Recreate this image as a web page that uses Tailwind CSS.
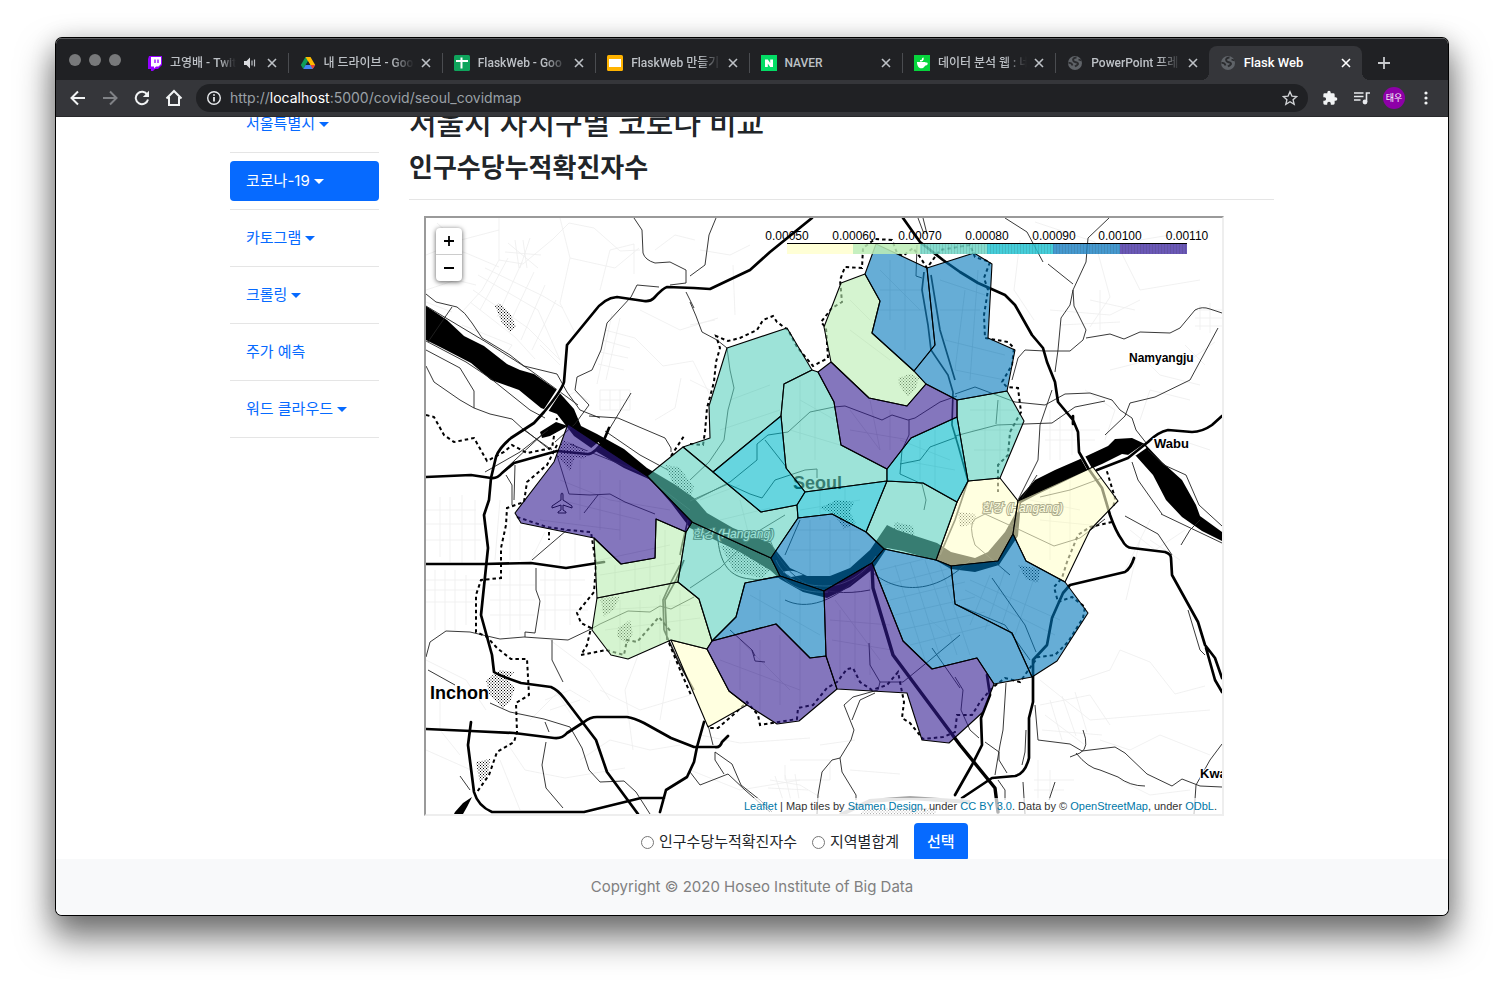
<!DOCTYPE html>
<html lang="ko">
<head>
<meta charset="utf-8">
<meta name="viewport" content="width=device-width, initial-scale=1">
<title>Flask Web</title>
<script src="https://cdn.jsdelivr.net/npm/@tailwindcss/browser@4"></script>
</head>
<body class="bg-white font-[Inter,'Noto_Sans_CJK_KR',sans-serif]">
<svg class="hidden" aria-hidden="true">
  <symbol id="x" viewBox="0 0 16 16"><path d="M4 4l8 8M12 4l-8 8" stroke="currentColor" stroke-width="1.6" fill="none"/></symbol>
  <symbol id="globe" viewBox="0 0 16 16"><circle cx="8" cy="8" r="7" fill="#5f6368"/><path d="M9.500 2.500C6.500 2.500 5.500 4.500 6.500 6S10.500 7 11 8.500S9.500 10 8 11.500" stroke="#2b2c2f" stroke-width="2" fill="none"/><path d="M1.500 8c2-.3 3.500.7 4 2.500M11.500 4.500l3 1" stroke="#2b2c2f" stroke-width="1.800" fill="none"/></symbol>
</svg>
<div class="flex h-screen flex-col px-14 pt-[38px] pb-[74px]">
<div class="flex min-h-0 flex-1 flex-col overflow-hidden rounded-md bg-white shadow-[0_0_0_1px_#000,0_20px_34px_4px_rgba(0,0,0,0.5),0_4px_26px_rgba(0,0,0,0.2)]">

  <header class="flex-none bg-[#202124]">
    <div class="flex h-[42px] items-end border-t border-[#5c5d60] pr-[86px] font-[Roboto,'Noto_Sans_CJK_KR',sans-serif] text-xs font-medium text-[#bdc1c6]">
      <div class="flex h-full w-[79px] flex-none items-center gap-2 pl-[13px]">
        <span class="size-3 rounded-full bg-[#78797b]"></span><span class="size-3 rounded-full bg-[#78797b]"></span><span class="size-3 rounded-full bg-[#78797b]"></span>
      </div>
      <div class="flex h-[34px] min-w-0 flex-1 items-center pr-2">
        <span class="w-3 flex-none"></span>
        <svg class="mr-[7px] size-4 flex-none" viewBox="0 0 16 16"><path d="M2 1h13v9l-4 4H8l-2 2H4v-2H1V4z" fill="#9400ff"/><path d="M4 2h10v7l-2.500 2.500H9L7 13.500V11.500H4z" fill="#fff"/><path d="M8 4.500v3.500M11 4.500v3.500" stroke="#9400ff" stroke-width="1.300"/></svg>
        <span class="min-w-0 flex-1 whitespace-nowrap [mask-image:linear-gradient(to_right,#000_75%,transparent)]">고영배 - Twit</span>
        <svg class="mx-[7px] size-3.5 flex-none" viewBox="0 0 14 14"><path d="M1 5h2.500L7 1.500v11L3.500 9H1z" fill="#dadce0"/><path d="M9 4.500v5M11.500 3.500v7" stroke="#bdc1c6" stroke-width="1.200"/></svg>
        <button aria-label="탭 닫기" class="flex-none"><svg class="size-4"><use href="#x"/></svg></button>
      </div>
      <div class="flex h-[34px] min-w-0 flex-1 items-center pr-2">
        <span class="mr-[11px] h-5 w-px flex-none bg-[#4a4c50]"></span>
        <svg class="mr-[7px] size-4 flex-none" viewBox="0 0 16 16"><path d="M5.500 2h5L8 6.200 3.300 14 .8 10z" fill="#0f9d58"/><path d="M5.500 2h5l4.700 8h-5z" fill="#ffba00"/><path d="M5.600 10h9.600l-2.500 4H3.300z" fill="#4285f4"/><path d="M10.300 10h4.900l-2.500 4z" fill="#ea4335"/><path d="M8 6.200L10.300 10H5.700z" fill="#202124"/></svg>
        <span class="min-w-0 flex-1 whitespace-nowrap [mask-image:linear-gradient(to_right,#000_75%,transparent)]">내 드라이브 - Goo</span>
        <button aria-label="탭 닫기" class="ml-1 flex-none"><svg class="size-4"><use href="#x"/></svg></button>
      </div>
      <div class="flex h-[34px] min-w-0 flex-1 items-center pr-2">
        <span class="mr-[11px] h-5 w-px flex-none bg-[#4a4c50]"></span>
        <svg class="mr-2 size-4 flex-none" viewBox="0 0 16 16"><rect width="16" height="16" rx="1.500" fill="#0fa45c"/><path d="M2 6h12M7.500 2.500v11" stroke="#fff" stroke-width="2"/></svg>
        <span class="min-w-0 flex-1 whitespace-nowrap [mask-image:linear-gradient(to_right,#000_75%,transparent)]">FlaskWeb - Goo</span>
        <button aria-label="탭 닫기" class="ml-1 flex-none"><svg class="size-4"><use href="#x"/></svg></button>
      </div>
      <div class="flex h-[34px] min-w-0 flex-1 items-center pr-2">
        <span class="mr-[11px] h-5 w-px flex-none bg-[#4a4c50]"></span>
        <svg class="mr-2 size-4 flex-none" viewBox="0 0 16 16"><rect width="16" height="16" rx="1.500" fill="#ffb300"/><rect x="2" y="4" width="12" height="8" fill="#fff"/></svg>
        <span class="min-w-0 flex-1 whitespace-nowrap [mask-image:linear-gradient(to_right,#000_75%,transparent)]">FlaskWeb 만들기</span>
        <button aria-label="탭 닫기" class="ml-1 flex-none"><svg class="size-4"><use href="#x"/></svg></button>
      </div>
      <div class="flex h-[34px] min-w-0 flex-1 items-center pr-2">
        <span class="mr-[11px] h-5 w-px flex-none bg-[#4a4c50]"></span>
        <svg class="mr-2 size-4 flex-none" viewBox="0 0 16 16"><rect width="16" height="16" fill="#03dc65"/><path d="M4 12V4.500h2.800L9.200 8V4.500H12V12H9.200L6.800 8.500V12z" fill="#fff"/></svg>
        <span class="min-w-0 flex-1 whitespace-nowrap">NAVER</span>
        <button aria-label="탭 닫기" class="ml-1 flex-none"><svg class="size-4"><use href="#x"/></svg></button>
      </div>
      <div class="flex h-[34px] min-w-0 flex-1 items-center pr-2">
        <span class="mr-[11px] h-5 w-px flex-none bg-[#4a4c50]"></span>
        <svg class="mr-2 size-4 flex-none" viewBox="0 0 16 16"><rect width="16" height="16" fill="#06d43c"/><path d="M3 7h8.500v.7c1.500-.6 2.500.2 2.200 1.300c-.3 1.200-1.500 1.700-2.700 1.700C10 12.800 8.800 13.300 7.200 13.300C4.500 13.300 3 10.500 3 7z" fill="#fff"/><path d="M6 5.800c2 0 3.500-1 2.800-3" stroke="#fff" stroke-width="1.600" fill="none"/></svg>
        <span class="min-w-0 flex-1 whitespace-nowrap [mask-image:linear-gradient(to_right,#000_75%,transparent)]">데이터 분석 웹 : 네</span>
        <button aria-label="탭 닫기" class="ml-1 flex-none"><svg class="size-4"><use href="#x"/></svg></button>
      </div>
      <div class="flex h-[34px] min-w-0 flex-1 items-center pr-2">
        <span class="mr-[11px] h-5 w-px flex-none bg-[#4a4c50]"></span>
        <svg class="mr-2 size-4 flex-none"><use href="#globe"/></svg>
        <span class="min-w-0 flex-1 whitespace-nowrap [mask-image:linear-gradient(to_right,#000_75%,transparent)]">PowerPoint 프레</span>
        <button aria-label="탭 닫기" class="ml-1 flex-none"><svg class="size-4"><use href="#x"/></svg></button>
      </div>
      <div class="relative flex h-[34px] min-w-0 flex-1 items-center rounded-t-lg bg-[#35363a] pr-2 text-white">
        <span class="absolute bottom-0 -left-2 size-2 bg-[radial-gradient(circle_at_0_0,transparent_8px,#35363a_8px)]"></span>
        <span class="absolute -right-2 bottom-0 size-2 bg-[radial-gradient(circle_at_100%_0,transparent_8px,#35363a_8px)]"></span>
        <span class="w-[11px] flex-none"></span>
        <svg class="mr-2 size-4 flex-none"><use href="#globe"/></svg>
        <span class="min-w-0 flex-1 text-[13px] whitespace-nowrap">Flask Web</span>
        <button aria-label="탭 닫기" class="ml-1 flex-none"><svg class="size-4"><use href="#x"/></svg></button>
        <button aria-label="새 탭" class="absolute top-[10px] left-[calc(100%+15px)]"><svg class="size-3.5" viewBox="0 0 14 14"><path d="M7 1v12M1 7h12" stroke="#c8cacd" stroke-width="1.800"/></svg></button>
      </div>
    </div>

    <div class="flex h-[37px] items-center border-b border-[#28292b] bg-[#35363a] px-[6px]">
      <button aria-label="뒤로" class="flex w-8 justify-center"><svg class="size-4" viewBox="0 0 16 16"><path d="M15 8H2M8 1.500L1.500 8L8 14.500" stroke="#f1f3f4" stroke-width="2" fill="none"/></svg></button>
      <button aria-label="앞으로" class="flex w-8 justify-center"><svg class="size-4" viewBox="0 0 16 16"><path d="M1 8h13M8 1.500L14.500 8L8 14.500" stroke="#808286" stroke-width="2" fill="none"/></svg></button>
      <button aria-label="새로고침" class="flex w-8 justify-center"><svg class="size-4" viewBox="0 0 16 16"><path d="M13.300 4.800A6.200 6.200 0 1 0 14 9.500" stroke="#f1f3f4" stroke-width="2" fill="none"/><path d="M15 .8V7H8.800z" fill="#f1f3f4"/></svg></button>
      <button aria-label="홈" class="flex w-8 justify-center"><svg class="size-[18px]" viewBox="0 0 18 18"><path d="M1.500 9.500L9 2l7.500 7.500M4 8v8h10V8" stroke="#f1f3f4" stroke-width="2" fill="none"/></svg></button>
      <div class="mx-[6px] flex h-7 min-w-0 flex-1 items-center rounded-full bg-[#202124] px-[10px]">
        <svg class="mr-2 size-4 flex-none" viewBox="0 0 16 16"><circle cx="8" cy="8" r="6.300" stroke="#e8eaed" stroke-width="1.400" fill="none"/><path d="M8 7v4.500M8 4.200v1.600" stroke="#e8eaed" stroke-width="1.800"/></svg>
        <a href="http://localhost:5000/covid/seoul_covidmap" class="flex-1 text-sm whitespace-nowrap text-[#9aa0a6]">http://<span class="text-white">localhost</span>:5000/covid/seoul_covidmap</a>
        <button aria-label="북마크"><svg class="size-4" viewBox="0 0 24 24"><path d="M12 2.500l2.900 6.700 7.100.6-5.400 4.700 1.700 7-6.300-3.800-6.300 3.800 1.700-7L2 9.800l7.100-.6z" stroke="#d0d2d5" stroke-width="2" fill="none"/></svg></button>
      </div>
      <button aria-label="확장 프로그램" class="flex w-8 justify-center"><svg class="size-4" viewBox="0 0 24 24"><path d="M20.500 11H19V7a2 2 0 0 0-2-2h-4V3.500a2.500 2.500 0 0 0-5 0V5H4a2 2 0 0 0-2 2v3.800h1.500a2.700 2.700 0 0 1 0 5.400H2V20a2 2 0 0 0 2 2h3.800v-1.500a2.700 2.700 0 0 1 5.400 0V22H17a2 2 0 0 0 2-2v-4h1.500a2.500 2.500 0 0 0 0-5z" fill="#f1f3f4"/></svg></button>
      <button aria-label="미디어 제어" class="flex w-8 justify-center"><svg class="size-4" viewBox="0 0 16 16"><path d="M0 3h9.500M0 6.500h9.500M0 10h6.500M12.500 12V3H16" stroke="#e8eaed" stroke-width="1.600" fill="none"/><circle cx="11" cy="12" r="2.400" fill="#e8eaed"/></svg></button>
      <button aria-label="프로필" class="flex w-8 justify-center"><span class="flex size-[22px] items-center justify-center rounded-full bg-[#8e00a8] text-[9px] text-white">태우</span></button>
      <button aria-label="메뉴" class="flex w-8 justify-center"><svg class="size-4" viewBox="0 0 16 16" fill="#f1f3f4"><circle cx="8" cy="3" r="1.600"/><circle cx="8" cy="8" r="1.600"/><circle cx="8" cy="13" r="1.600"/></svg></button>
    </div>
  </header>

  <div class="min-h-0 flex-1 overflow-hidden">
    <div class="mx-auto -mt-[13px] flex max-w-[1044px] gap-[30px]">
      <nav class="w-[149px] flex-none text-[15px] leading-6">
        <a href="#" class="flex h-10 items-center gap-1 px-4 text-[#066aff]">서울특별시<span class="border-x-[5px] border-t-[5px] border-x-transparent border-t-current"></span></a>
        <hr class="my-2 border-[#e5e5e5]">
        <a href="#" class="flex h-10 items-center gap-1 rounded bg-[#066aff] px-4 text-white">코로나-19<span class="border-x-[5px] border-t-[5px] border-x-transparent border-t-current"></span></a>
        <hr class="my-2 border-[#e5e5e5]">
        <a href="#" class="flex h-10 items-center gap-1 px-4 text-[#066aff]">카토그램<span class="border-x-[5px] border-t-[5px] border-x-transparent border-t-current"></span></a>
        <hr class="my-2 border-[#e5e5e5]">
        <a href="#" class="flex h-10 items-center gap-1 px-4 text-[#066aff]">크롤링<span class="border-x-[5px] border-t-[5px] border-x-transparent border-t-current"></span></a>
        <hr class="my-2 border-[#e5e5e5]">
        <a href="#" class="flex h-10 items-center px-4 text-[#066aff]">주가 예측</a>
        <hr class="my-2 border-[#e5e5e5]">
        <a href="#" class="flex h-10 items-center gap-1 px-4 text-[#066aff]">워드 클라우드<span class="border-x-[5px] border-t-[5px] border-x-transparent border-t-current"></span></a>
        <hr class="my-2 border-[#e5e5e5]">
      </nav>
      <main class="min-w-0 flex-1 text-[#212529]">
        <h2 class="pt-px text-[30px] leading-9 font-medium">서울시 자치구별 코로나 비교</h2>
        <h3 class="mt-[7px] text-[26px] leading-10 font-bold">인구수당누적확진자수</h3>
        <hr class="mt-[11px] border-[#e5e5e5]">
        <div class="px-[15px] pt-4">
          <div class="relative h-[600px] max-w-[800px] overflow-hidden border-2 border-t-[#9a9a9a] border-r-[#eee] border-b-[#eee] border-l-[#9a9a9a] font-['Liberation_Sans',sans-serif]">
            <svg class="h-full w-full" viewBox="426 218 796 596" preserveAspectRatio="xMidYMid slice" role="img" aria-label="서울 자치구 지도">
              <defs>
                <pattern id="dots" width="3" height="3" patternUnits="userSpaceOnUse"><rect width="1" height="1" fill="#000"/><rect x="1.500" y="1.500" width="1" height="1" fill="#000"/></pattern>
                <pattern id="strip" width="3" height="10" patternUnits="userSpaceOnUse"><rect width="1" height="10" fill="#000" opacity=".12"/></pattern>
              </defs>
              <rect x="426" y="218" width="796" height="596" fill="#fff"/>
              <!-- minor streets -->
              <g fill="none" stroke="#ededed" stroke-width=".8">
                <path d="M437 223l20 18 42-11M499 218v42l24 4 30-25 16-16 25 5 26 23 20-1M426 255l20-8 20 6 33 14M499 260l-17 30-20 22M478 275l60 35 22 50M485 268l58 28 20 12M473 290l55 38 32 32M470 302l45 35 20 22M508 258l-28 52M522 262l-25 55M534 272l-26 55M545 285l-24 55M556 300l-24 50M530 238l-10 30M508 243l30 25M505 252l36 3M515 240l4 28M523 240l4 28M560 218l10 40-10 45 15 30M600 290l10-40 24-6v30M570 258l45 10 24-20M426 290l30-10 20 5M452 312l-26-10M462 325l50 20-20 30M540 345l20 20M612 314l-15 70M620 318l-14 62M602 340l28 8M600 352l28 6M598 364l26 6M605 330l30 8 28 28 30-5 20 40M640 310l40 20 38-12M700 250l30 5 20-10M733 265l2 50M690 325l25-5M690 380l20 10M655 250l20-15 20 5M600 390h30v20h-30zM610 390v20M620 390v20M600 400h30M560 400l15-8 15 10M655 420l20-12 6-30"/>
                <path d="M440 497v60M450 497v65M462 495v70M475 500v60M426 510h50M426 524h58M426 540h55M500 500l-5 60M510 515v45M520 525v35M545 532l-15 30M560 535v30M575 538v25M426 580h55M426 590h54M426 602h54M435 570v60M445 570v62M455 570v60M466 575v50M500 575v60M510 570v65M520 570v60M490 585h45M490 600h45M490 615h45M545 570v60M555 570v60M570 570v55M540 580h45M540 595h42M540 610h48M550 640l40 30 20 30M426 660l40 20 20 30M560 690l-30 30M545 700l25-10 20 12M550 710l30-10M555 690l20 30M600 690l40 20 50-15M580 760l30-20 40 10 30-5M440 690v40l20 25M426 750l45 20M505 740l20 30 40 8 60-10M500 760l20 50M640 650l-15 40 8 60M670 660l-10 60M700 735l40 8 70-5M690 770l50 20 60-10M790 760h40v20h-45v-15M770 780l30 5 20 12M768 788l40 2M775 776l8 24M785 775l6 26M795 774l4 25M820 745l35-5M850 770l50 4"/>
                <path d="M1035 222l60 20 15 55-20 30M1100 290v40M1020 240l-6 50 20 30M1050 310l60 5 30-15M1060 325l60-3M1090 300l45 10M1140 240l60-10M1120 250l20 40 60-10M1140 355l20 20 40 10M1085 390l30 20-10 30M1110 370l60-15M1040 430h60M1045 440h50M1050 410v50M1060 415v45M1072 415v40M1195 310h27M1195 318h27M1195 326h27M1200 305v25M1210 303v30M1185 345l20 20M1190 360l25-18M1140 420l10-30 40 10M1180 440l30 10M1130 530l25 20 30-20M1140 540l-14 60M1150 520l-25 50M1180 560l-30-20M1080 680l30-10 10-20 30 12 25 32 30-8M1040 680l50 40 120-10M1040 705l50-10 20 30M1045 715l40 30M1050 700l12 40M1062 696l14 40M1075 692l12 40M1042 730l60 5M1038 760v50M1050 770v35M1034 780h40M1034 790h30M1100 740l30 10 30-15 50 20M1120 780l30 15 40-5M930 620l25 20"/>
                <path stroke="#dedede" d="M730 400l40-15M720 430l60-20M800 400l35 20M790 430l50 15M800 380v60M815 380v80M850 300l20 20M850 330l40 30M880 270l40 40M890 260v60M905 260v90M880 290h45M880 310h48M940 280l45 15M940 310h40M945 340l60 15M955 370l50 10M965 290l-10 80M978 270l-8 110M850 410l30 40M870 400l10 50M890 410v40M850 430l60 10M900 440l50 20M900 460l55 10M920 440v40M935 430v60M970 410h50M972 430h45M974 450h35M985 400v75M1000 400v70M700 500l40-15M720 520l50-12M740 500l10 40M800 510l60-10M820 490v30M845 488v35M790 530h80M790 550h70M810 520v60M830 520v60M850 525v55M880 570l60-15M885 585l70-18M890 600l75-18M895 615l80-18M900 630l85-18M910 645l80-20M895 565l30 95M910 562l30 95M925 560l32 95M940 565l30 90M970 580l90 40M965 590l90 45M990 575l-20 50M1005 570l-20 60M1020 570l-20 60M1035 575l-20 60M835 600l45 60M830 620l60 5M832 640l60 10M840 610v70M855 590v90M870 580v95M750 595l70 40M760 590v30M780 590v40M800 590v60M740 640l50 50M720 660l80 30M740 640v50M760 640v70M780 635v70M800 650v60M600 560l70-15M600 575l75-12M615 565v30M635 560v32M650 560v30M665 530v60M600 610l90-5M605 630l95-12M620 600v55M640 600v50M660 595v50M680 590v50M560 480l50 20 60 10M560 500l80 20M580 460v60M600 470v60M620 480v60M540 520l80 10M1030 500l50 10M1040 520l50 5M1050 490v70M1070 480v70"/>
              </g>
              <!-- river -->
              <path d="M426 306L447 320L464 336L484 346L507 364L520 370L534 374L557 390L574 409L581 426L597 434L624 449L647 468L674 484L694 498L707 513L733 528L770 543L790 568L807 576L830 576L850 568L870 550L887 525L897 530L937 543L951 552L975 558L988 552L1005 532L1015 514L1019 498L1035 480L1055 470L1078 460L1108 446L1115 439L1132 438L1145 444L1162 462L1182 480L1196 505L1200 516L1222 532V541L1202 531L1182 517L1166 500L1153 475L1136 456L1122 454L1102 464L1088 470L1055 486L1038 494L1021 503L1018 536L999 565L975 572L951 569L937 561L903 551L887 548L873 569L850 587L827 598L803 592L780 579L770 570L740 552L690 528L671 503L651 480L624 468L597 452L574 436L557 414L541 408L519 390L491 380L471 363L444 349L426 340z" fill="#000"/>
              <path d="M783 572c8-3 15 0 20 3l-12 2z" fill="#fff"/>
              <path d="M540 432l16-10 12 4-18 10-8 2zM455 812l8-9 9-6-5 10-4 7h-9z" fill="#000"/>
              <path d="M718 541c12 4 40 20 58 32M718 541c3 24 12 36 32 38c12 2 22-2 34-2" fill="none" stroke="#000"/>
              <path d="M776 560c10 22 30 26 50 26s38-12 50-30M774 565c12 24 34 28 54 27" fill="none" stroke="#555"/>
              <!-- parks -->
              <path d="M495 306l5-3 10 10 6 14-6 5-8-9zM562 440l12 4 15 10-6 5-8-2-5 14-12-14zM898 378l12-4 9 4-3 10-8 9-9-12zM665 465l14 2 15 20-4 12-14-8zM820 508l16-8 18 2-4 10 6 12-12 5-10-15zM720 545l20 5 30 20-8 8-28-6zM958 512l18 2-2 10-14 3zM1018 565l22 4-2 14-12-4zM600 598l20-1-6 12-10 8zM618 628l12-8 3 14-6 10-10-8zM486 680l14-10 14 2-6 8 7 8-5 14-7 6-14-14zM476 762l14-3-2 16-8 8zM735 543l25 8 5 12-22-8zM895 522l18 4 2 12-22-6zM866 808h70v6h-76z" fill="url(#dots)"/>
              <!-- secondary roads -->
              <g fill="none" stroke="#222" stroke-width=".9">
                <path d="M634 218L642 230L643 253Q645 260 655 263L670 262L686 270V283L670 285M686 292L694 308M426 294L436 302L457 307Q465 312 472 323L482 338L510 355L524 366L557 374L567 392L580 410L600 418M426 306L486 342L530 370L578 405M428 342L452 307M426 341L466 362L490 378L530 410L545 418M426 350L460 368L474 391V408L490 414L512 419L524 430L552 450M426 366L434 382L460 400L474 408M659 287L637 285L631 297L607 323L601 350L592 370L577 377L575 390L589 405L575 424L555 442M589 416L618 418L665 438L671 448V452M570 444L600 456L640 472L690 510M605 431L640 455L668 470M631 393L610 428"/>
                <path d="M485 472L520 452L548 430M500 474L545 432M525 430L550 450M515 465L514 500M506 475L512 485V505M557 455L569 494L590 495L610 494L625 502L655 514M598 495L584 513M567 530L532 560M536 568V590L540 601L535 633L525 632V637M426 657L430 642L446 631L470 632L500 639L524 637L568 640L591 629L600 624L628 611L650 612L660 606L671 609L694 597M552 640V660L563 682M428 670L455 685M490 703L510 712L544 719L570 727L582 748L589 770L600 782L624 781L636 792L650 814M545 722L549 732M546 742L542 765L546 788L563 808M460 776L470 790"/>
                <path d="M716 218L709 235L705 265L690 276M690 302L696 316L702 332L717 340L727 348L730 370L734 388L728 410L724 440L709 462L690 480M788 432L768 435L757 444L757 460L730 482L695 500M765 440L787 468M690 501L728 484L750 494L762 498L775 480L805 470L817 469V478M788 432L810 412L834 407L845 406L882 420L892 415L908 420L915 418L940 402L957 396M909 420V435L902 450L900 474L922 484L926 500L924 510M900 464L920 460L930 447L957 437M918 218L924 234M923 218L927 234M917 245L916 276L922 278"/>
                <path stroke-width="1.700" d="M924 272L922 290L928 325L931 350L948 375L953 392L952 425L958 445L968 481L955 520L940 555M931 275L940 330L955 380M680 555L682 545L688 520M664 630L663 600L672 580L680 565M667 640L665 600L676 580L684 560M664 630L680 665L694 690"/>
                <path d="M690 588L720 568L757 532L785 515M800 520L785 555M785 600C805 610 835 605 870 565M770 540C785 580 820 600 870 590M870 570C890 590 930 600 970 560M1005 218L1027 232L1043 262M1048 264L1073 284M1109 218L1088 238L1086 262L1073 290L1074 306L1086 330L1083 340L1070 351H1045L1025 350L1018 358L1012 380M1073 290L1070 305L1061 318L1058 350L1055 372M1086 338L1110 334L1124 339L1140 332L1170 333L1180 328L1195 310Q1202 306 1210 309L1222 313M1218 328L1190 380L1155 397L1130 403L1125 416L1105 435M955 394L975 387L1015 402L1045 405L1065 394L1090 393L1112 400L1120 410L1132 418L1136 430L1147 444M955 436L997 425L1052 423L1075 407L1105 401M998 400L996 424M1052 390L1040 425L1038 460L1017 502M1022 498L1037 475M1102 478L1070 490L1040 497M1132 462L1138 480L1162 514M1148 450L1164 465L1186 475L1199 505L1222 526"/>
                <path d="M975 519Q968 525 975 545L1010 575M975 519L985 514L1020 530L1054 546L1080 538L1105 519M1125 516L1158 534L1172 555M1181 545L1190 530L1200 520M1161 514L1222 543M992 578L1025 625L1036 652M955 604L1005 625L1030 660M1188 610L1200 650L1205 655M1035 705L1038 740L1070 744L1082 751L1115 747L1125 753L1147 774L1172 786L1182 779L1200 786L1222 787M1083 730Q1090 748 1080 753L1070 757M1076 753Q1088 768 1100 770L1118 777Q1130 786 1145 786M1222 744L1210 760L1196 785L1194 814M1006 683L1003 730L1000 745L995 775M985 742L999 752V760L1007 773M998 780L1005 790V800M1023 782L1025 814M1055 782L1049 800M1026 730L1025 752L1022 765M955 677L963 690L961 710L970 730L979 738M869 643L870 665L880 682L878 690M880 682H903L930 660L960 635M932 648L960 688M878 690L853 697L844 705L854 730L851 740L840 758L842 772L856 795L856 800M875 693L860 700L852 720M840 758L832 760L822 772L818 795L817 814M708 725L713 745M715 752L732 764L741 785L760 800L772 812M715 752V760L724 774M690 772L700 785L728 774L745 790L770 812M730 630L752 650L755 661L765 662M752 650L755 656"/>
              </g>
              <!-- administrative border -->
              <g fill="none" stroke="#000" stroke-width="2" stroke-dasharray="3.500 3">
                <path d="M690 444L703 445L705 432L707 408L714 382L716 362L720 348L716 336L728 341L740 338L757 330L763 320L773 316L777 322L788 330L797 347L813 366L828 358L826 328L821 322L832 308L842 302L840 280L845 267L862 268L863 248L875 239L892 240L897 253L903 256L913 248L920 257L927 268L940 250L970 245L975 257L990 262L984 278L988 290L984 315L985 338L1008 342L1014 348L1012 365L1002 382L1007 387L1018 388L1021 412L1010 432L1008 455L998 465V492"/>
                <path d="M1105 465L1115 498L1113 508M1112 522L1090 527L1078 535L1067 562L1062 578L1054 587L1058 602L1072 597L1085 607L1083 618L1068 642L1055 655L1038 657L1027 672L1020 682L1005 678L992 688L980 702L972 715L957 715L955 732L943 737L923 739L910 723L902 718L904 702L898 672L887 685L872 690L860 682L853 668L847 669L837 682L827 688L813 705L798 708L797 719L760 725L758 715L747 702L733 715L718 728H708M669 643L681 672L691 695"/>
                <path d="M517 517L547 527L567 530L591 532L596 565L594 592L577 613L581 623L591 628L587 645L581 655L606 650L624 655L627 640L637 642L659 617L671 632M426 415L434 417L444 435L454 442L474 438L487 461L504 452L512 445L527 453L552 448L557 418M557 445L547 465L527 482L524 502L507 508L506 525L501 548V578L481 580L476 595V632L487 637L497 648L511 659H527L529 695L516 703L517 732L514 742L497 752L489 775L477 792M671 456L684 436M549 532V540"/>
              </g>
              <!-- motorways -->
              <g fill="none" stroke="#fff" stroke-width="5"><path d="M545 412L562 386M588 454L600 444M1080 452L1090 470M1145 446L1128 458L1097 470"/></g>
              <g fill="none" stroke="#000" stroke-width="2.700" stroke-linejoin="round" stroke-linecap="round">
                <path d="M812 218L770 252L750 270L710 289L694 288L667 287Q663 288 654 298Q650 302 644 301L617 297Q604 298 594 312L567 345L564 382Q562 390 544 412L534 423L511 438Q499 448 496 457L491 478L489 500L484 515L488 548L481 615L492 655L494 672Q500 676 521 683L551 687Q558 690 564 698L596 740L607 772L638 814"/>
                <path d="M426 477L471 475L491 478Q497 479 502 473L514 463L557 451L587 454Q594 455 604 440L609 428M426 564H484L531 563L566 568L604 562M426 729L471 731L514 733L554 738Q562 739 567 733L584 722Q590 717 597 717H627Q634 718 644 723L671 738L694 747H715Q720 748 722 742L728 736"/>
                <path d="M471 722L468 745L474 792Q478 806 492 812H584L641 798H664M660 812L666 790L687 777L694 762L697 747L704 722"/>
                <path d="M903 218L920 242L943 260L960 272L978 283L1005 295L1015 305L1032 335L1043 348L1047 362L1055 382L1058 402L1073 420L1078 432L1079 452L1088 468L1102 488L1110 515Q1116 532 1122 540Q1126 548 1132 548L1165 552Q1171 554 1171 558L1172 575L1198 622L1205 645L1215 658L1222 678M1206 648L1215 680L1222 692M1073 416V424"/>
                <path d="M1222 416L1212 425Q1202 432 1192 432L1168 430Q1158 432 1148 442L1128 458L1097 470"/>
                <path d="M1134 558Q1131 568 1125 572L1070 585L1063 593L1052 618L1047 645L1033 660V702L1029 718V758Q1025 774 1015 776L992 778L962 798M987 675L990 695L981 718L982 745L972 765L955 795"/>
                <path stroke-width="3.400" d="M872 567L873 588L893 655L960 745L995 788L998 812"/>
              </g>
              <path d="M840 815l30-14 40-3 60 4" stroke="#aaa" stroke-width="4" fill="none"/>
              <path d="M562 493q-1 0-1 2v5l-9 6v2l9-3v5l-3 2v1h8v-1l-3-2v-5l9 3v-2l-9-6v-5q0-2-1-2z" fill="none" stroke="#000"/>
              <g fill="#000" font-weight="700" stroke="#fff" stroke-width="2" paint-order="stroke" font-size="13">
                <text x="1129" y="362" font-size="12">Namyangju</text><text x="1154" y="448">Wabu</text><text x="1200" y="778">Kwa</text>
                <text x="430" y="699" font-size="18">Inchon</text><text x="793" y="489" font-size="18">Seoul</text>
              </g>
              <g fill="#fff" stroke="#333" stroke-width="2" paint-order="stroke" font-size="12" font-style="italic" font-family="Liberation Sans, Noto Sans CJK KR, sans-serif">
                <text x="692" y="538">한강 (Hangang)</text><text x="981" y="512">한강 (Hangang)</text>
              </g>
              <!-- districts -->
              <g fill-opacity=".6" stroke="#000" stroke-width="1.100" stroke-linejoin="round">
                <g fill="#ffffcc">
                  <path d="M968 481L1000 478L1018 501L1013 534L998 561L951 566L936 560L957 502z"/>
                  <path d="M1018 501L1093 467L1118 501L1090 530L1065 582L1026 561L1013 534z"/>
                  <path d="M671 640L707 649L729 691L747 705L708 727z"/>
                </g>
                <g fill="#b9edb1">
                  <path d="M841 283L865 274L880 301L872 333L914 371L926 384L907 406L869 398L831 362L824 327z"/>
                  <path d="M597 598L678 582L699 599L712 641L707 649L671 640L628 659L611 655L592 630z"/>
                  <path d="M594 538L621 564L655 558L656 519L686 532L678 582L597 598z"/>
                </g>
                <g fill="#5cd0be">
                  <path d="M727 348L787 328L812 370L784 384L781 416L713 472L683 447L710 438L709 406z"/>
                  <path d="M812 370L818 372L834 402L841 445L887 469V481L805 492L786 468L781 416L784 384z"/>
                  <path d="M957 400L1007 391L1024 421L1000 478L968 481L957 417z"/>
                  <path d="M887 481L923 483L957 502L936 560L884 549L866 532z"/>
                  <path d="M692 522L771 558L780 576L745 583L736 617L712 641L699 599L678 582L686 532z"/>
                  <path d="M647 476L683 447L713 472L761 512L797 505L798 518L771 558L692 522z"/>
                </g>
                <g fill="#00b9ca">
                  <path d="M781 416L786 468L805 492L797 505L761 512L713 472z"/>
                  <path d="M911 438L957 417L968 481L957 502L923 483L887 481V469z"/>
                  <path d="M805 492L887 481L866 532L832 514L798 518L797 505z"/>
                </g>
                <g fill="#0076bb">
                  <path d="M865 274L876 244L927 268L935 345L914 371L872 333L880 301z"/>
                  <path d="M927 268L974 253L992 264L988 338L1015 350L1007 391L957 400L926 384L914 371L935 345z"/>
                  <path d="M798 518L832 514L866 532L884 549L872 563L824 591L780 576L771 558z"/>
                  <path d="M780 576L824 591L826 656L810 658L776 624L712 641L736 617L745 583z"/>
                  <path d="M1013 534L1026 561L1065 582L1088 613L1057 661L1032 677L1012 633L955 604L951 566L998 561z"/>
                  <path d="M884 549L936 560L951 566L955 604L1012 633L1032 677L994 684L977 658L932 669L903 641L872 563z"/>
                </g>
                <g fill="#321b91">
                  <path d="M818 372L831 362L869 398L907 406L926 384L957 400V417L911 438L887 469L841 445L834 402z"/>
                  <path d="M568 424L647 476L692 522L686 532L656 519L655 558L621 564L594 538L521 523L515 513L554 462z"/>
                  <path d="M712 641L776 624L810 658L826 656L837 689L799 721L777 724L747 705L729 691L707 649z"/>
                  <path d="M872 563L903 641L932 669L977 658L994 684L983 712L949 743L922 740L907 693L837 689L826 656L824 591z"/>
                </g>
              </g>
              <!-- colour scale -->
              <g opacity=".85">
                <rect x="787" y="243" width="66" height="11" fill="#ffffd0"/><rect x="853" y="243" width="67" height="11" fill="#bdeeb6"/><rect x="920" y="243" width="67" height="11" fill="#70d7c6"/><rect x="987" y="243" width="66" height="11" fill="#25c5d3"/><rect x="1053" y="243" width="67" height="11" fill="#2587c6"/><rect x="1120" y="243" width="67" height="11" fill="#513caa"/>
                <rect x="920" y="243" width="267" height="11" fill="url(#strip)"/>
              </g>
              <path d="M787 243.500H1187" stroke="#000"/>
              <g font-size="12" text-anchor="middle" fill="#000"><text x="787" y="240">0.00050</text><text x="854" y="240">0.00060</text><text x="920" y="240">0.00070</text><text x="987" y="240">0.00080</text><text x="1054" y="240">0.00090</text><text x="1120" y="240">0.00100</text><text x="1187" y="240">0.00110</text></g>
            </svg>
            <div class="absolute top-[10px] left-[10px] flex w-[26px] flex-col overflow-hidden rounded bg-white shadow-[0_1px_5px_rgba(0,0,0,0.65)]">
              <button aria-label="확대" class="flex h-[27px] items-center justify-center border-b border-[#ccc]"><svg class="size-3" viewBox="0 0 12 12"><path d="M6 1v10M1 6h10" stroke="#000" stroke-width="1.800"/></svg></button>
              <button aria-label="축소" class="flex h-[26px] items-center justify-center"><svg class="size-3" viewBox="0 0 12 12"><path d="M1 6h10" stroke="#000" stroke-width="1.800"/></svg></button>
            </div>
            <div class="absolute right-0 bottom-0 bg-white/70 px-[5px] text-[11px] leading-4 whitespace-nowrap text-[#333]"><a href="#" class="text-[#0078a8]">Leaflet</a> | Map tiles by <a href="#" class="text-[#0078a8]">Stamen Design</a>, under <a href="#" class="text-[#0078a8]">CC BY 3.0</a>. Data by © <a href="#" class="text-[#0078a8]">OpenStreetMap</a>, under <a href="#" class="text-[#0078a8]">ODbL</a>.</div>
          </div>
        </div>
        <form class="mt-[7px] flex items-center pl-[232px] text-[15px] leading-6">
          <input type="radio" id="r1" name="kind" class="mr-[5px] size-[13px] appearance-none rounded-full border border-[#767676] bg-white"><label for="r1" class="mr-[15px]">인구수당누적확진자수</label>
          <input type="radio" id="r2" name="kind" class="mr-[5px] size-[13px] appearance-none rounded-full border border-[#767676] bg-white"><label for="r2" class="mr-[15px]">지역별합계</label>
          <button type="button" class="h-[38px] rounded bg-[#066aff] px-[13px] font-medium text-white">선택</button>
        </form>
      </main>
    </div>
  </div>
  <footer class="flex h-14 flex-none items-center justify-center bg-[#f8f9fa] pt-px text-[15px] text-[#808080]">Copyright © 2020 Hoseo Institute of Big Data</footer>
</div>
</div>
</body>
</html>
